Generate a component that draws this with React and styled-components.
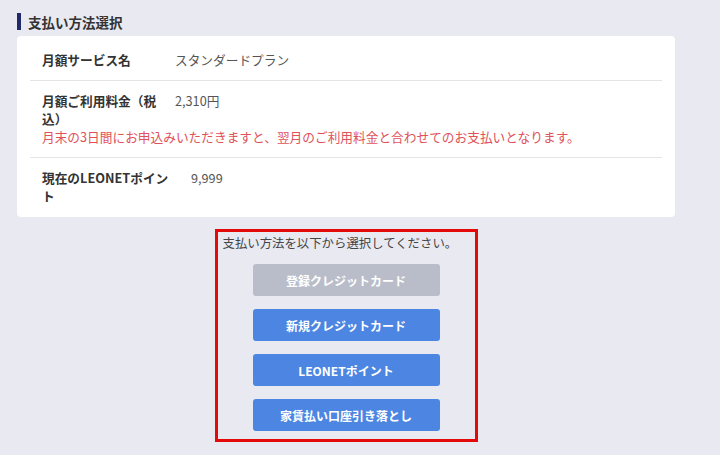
import React from "react";
import styled, { createGlobalStyle } from "styled-components";

const GlobalStyle = createGlobalStyle`
  html, body {
    margin: 0;
    padding: 0;
    background: #ffffff;
  }
  body {
    font-family: "Noto Sans CJK JP", "Noto Sans", sans-serif;
    color: #333;
  }
`;

const Page = styled.div`
  background: #e9e9f1;
  height: 455px;
  padding: 13px 0 0 17px;
  box-sizing: border-box;
`;

const Section = styled.div`
  width: 658px;
  display: flex;
  flex-direction: column;
`;

const Title = styled.h2`
  margin: 0;
  display: flex;
  align-items: center;
  gap: 7px;
  height: 17px;
  font-size: 13.5px;
  font-weight: 700;
  color: #333;
  &::before {
    content: "";
    width: 4px;
    height: 17px;
    background: #1f2a6b;
  }
`;

const Card = styled.div`
  margin-top: 6px;
  background: #fff;
  border-radius: 4px;
  padding: 4px 13px 1px;
`;

const Row = styled.div`
  padding: 11px 12px;
  border-top: ${(p) => (p.$first ? "none" : "1px solid #e4e4e8")};
  font-size: 12.7px;
  line-height: 18px;
`;

const Line = styled.div`
  display: flex;
`;

const Label = styled.div`
  width: ${(p) => p.$w}px;
  padding-right: ${(p) => p.$gap || 0}px;
  flex-shrink: 0;
  font-weight: 700;
  color: #333;
`;

const Value = styled.div`
  color: #555;
`;

const Note = styled.div`
  color: #e0525a;
`;

const Choice = styled.div`
  align-self: center;
  margin-top: 12px;
  width: 263px;
  box-sizing: border-box;
  border: 3px solid #e50a0a;
  padding: 2px 4px 8px;
  display: flex;
  flex-direction: column;
  align-items: center;
`;

const Prompt = styled.p`
  margin: 0 0 12px;
  align-self: stretch;
  padding-left: 1px;
  font-size: 12.4px;
  line-height: 18px;
  color: #444;
`;

const Buttons = styled.div`
  display: flex;
  flex-direction: column;
  gap: 13px;
`;

const PayButton = styled.button`
  width: 187px;
  height: 32px;
  border: none;
  border-radius: 3px;
  background: ${(p) => (p.$disabled ? "#b9bdc9" : "#4c86e2")};
  color: #fff;
  font-family: inherit;
  font-size: 12px;
  font-weight: 700;
  cursor: ${(p) => (p.$disabled ? "default" : "pointer")};
`;

const methods = [
  { label: "登録クレジットカード", disabled: true },
  { label: "新規クレジットカード" },
  { label: "LEONETポイント" },
  { label: "家賃払い口座引き落とし" },
];

export default function App() {
  return (
    <>
      <GlobalStyle />
      <Page>
        <Section>
          <Title>支払い方法選択</Title>
          <Card>
            <Row $first>
              <Line>
                <Label $w={133}>月額サービス名</Label>
                <Value>スタンダードプラン</Value>
              </Line>
            </Row>
            <Row>
              <Line>
                <Label $w={133}>月額ご利用料金（税込）</Label>
                <Value>2,310円</Value>
              </Line>
              <Note>
                月末の3日間にお申込みいただきますと、翌月のご利用料金と合わせてのお支払いとなります。
              </Note>
            </Row>
            <Row>
              <Line>
                <Label $w={132} $gap={17}>現在のLEONETポイント</Label>
                <Value>9,999</Value>
              </Line>
            </Row>
          </Card>
          <Choice>
            <Prompt>支払い方法を以下から選択してください。</Prompt>
            <Buttons>
              {methods.map((m) => (
                <PayButton key={m.label} $disabled={m.disabled}>
                  {m.label}
                </PayButton>
              ))}
            </Buttons>
          </Choice>
        </Section>
      </Page>
    </>
  );
}
